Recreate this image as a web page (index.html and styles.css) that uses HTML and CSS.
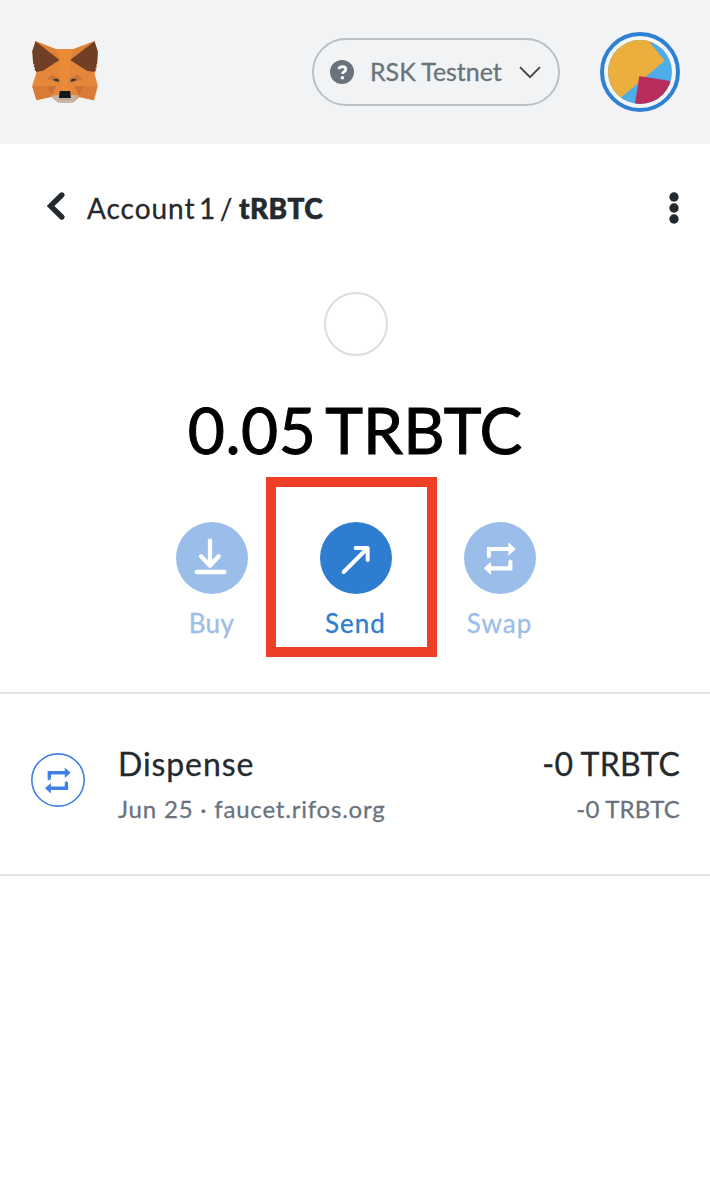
FILE: index.html
```html
<!DOCTYPE html>
<html lang="en">
<head>
<meta charset="utf-8">
<title>Wallet</title>
<link rel="stylesheet" href="styles.css">
</head>
<body>
<svg class="defs" width="0" height="0" aria-hidden="true">
  <symbol id="swap" viewBox="0 0 96 98">
    <path d="M16 42V20h60M80 56v22H20" fill="none" stroke="currentColor" stroke-width="12.500"/>
    <path d="M10 42h12v2l-6 4-6-2zM74 56l6-5 6 5z" fill="currentColor"/>
    <path d="M74 0l22 20-22 20zM22 58L0 78l22 20z" fill="currentColor"/>
  </symbol>
</svg>
<header class="header">
  <svg class="fox" viewBox="36 33 197 186" aria-label="Fox logo">
    <path fill="#e4873b" d="M46 34l62 24h51l64-24 10 34-5 53-5 9 10 38-11 43-44-11-18 17h-48l-18-17-45 11-13-43 12-38z"/>
    <path fill="#d97b37" d="M38 168l-2 1 13 41 45-10-12-32zM231 168l-45 1-13 31 46 10z"/>
    <path fill="#e98a36" d="M108 58h51l-16 101-1 25h-18l-4-25z"/>
    <path fill="#df8039" d="M46 34l62 24 10 32zM223 34l-64 24-9 32z"/>
    <path fill="#713f24" d="M46 34l72 56-50 32-19 4-6-7 2-5-5-4 3-5-4-4-3-37zM223 34l-73 56 50 32 22 4 5-7-2-5 5-4-3-5 4-4 2-37z"/>
    <path fill="#d0742f" d="M96 133l25 16-6 8-35-9zM172 133l-25 16 6 8 35-9z"/>
    <path fill="#cd6f35" d="M81 168l27 1-13 27zM192 168l-30 1 14 27z"/>
    <path fill="#283849" d="M99 147l14-1 5 10-15-4zM169 147l-14-1-5 10 15-4z"/>
    <path fill="#c5b5a6" d="M93 197l26-3h31l26 3-20 21h-41z"/>
    <path fill="#b3a498" d="M115 206h39l-4 4h-31z"/>
    <path fill="#161616" d="M119 183h31l2 21h-36z"/>
  </svg>
  <div class="network">
    <svg class="question" viewBox="0 0 24 24"><circle cx="12" cy="12" r="12" fill="#6a737d"/><path d="M8.700 9.200Q9.400 6.600 12.200 6.600Q15.800 6.700 15.800 9.300Q15.800 11 13.700 12Q12.500 12.600 12.500 14" fill="none" stroke="#fff" stroke-width="2.700"/><circle cx="12.400" cy="17.700" r="1.800" fill="#fff"/></svg>
    <span class="network-name">RSK Testnet</span>
    <svg class="chevron" viewBox="0 0 22 13"><path d="M1 1.200l10 10 10-10" fill="none" stroke="#444" stroke-width="1.900"/></svg>
  </div>
  <svg class="avatar" viewBox="30 36 240 240">
    <circle cx="150" cy="156" r="114" fill="#f4f5f7" stroke="#2f80d3" stroke-width="12"/>
    <clipPath id="disc"><circle cx="150" cy="156" r="96"/></clipPath>
    <g clip-path="url(#disc)"><path fill="#4dadeb" d="M50 56h200v200H50z"/><path fill="#ecae3d" d="M40 40h117l67 82L80 244H40z"/><path fill="#ef8a32" d="M172 58l22 8-12 5z"/><path fill="#b92d5d" d="M148 168l110 18-10 90H131z"/></g>
  </svg>
</header>
<nav class="nav">
  <svg class="back" viewBox="0 0 18 28"><path d="M14.800 3L3.500 14l11.300 11" fill="none" stroke="#24292e" stroke-width="5.400" stroke-linecap="round"/></svg>
  <span class="crumb">Account 1 /</span><strong class="asset">tRBTC</strong>
  <svg class="dots" viewBox="0 0 10 32"><circle cx="5" cy="5" r="4.700"/><circle cx="5" cy="16" r="4.700"/><circle cx="5" cy="27" r="4.700"/></svg>
</nav>
<main>
  <section class="overview">
    <div class="token"></div>
    <h1 class="balance"><span class="amount">0.05</span><span class="unit">TRBTC</span></h1>
    <div class="actions">
      <div class="action off">
        <svg class="disc" viewBox="0 0 216 216"><circle cx="108" cy="108" r="108" fill="#9bbde9"/><path d="M102 56v72M75 103l27 28 26-28M62 150h83" fill="none" stroke="#fff" stroke-width="13" stroke-linecap="round" stroke-linejoin="round"/></svg>
        <span class="buy">Buy</span>
      </div>
      <div class="action">
        <svg class="disc" viewBox="0 0 216 216"><circle cx="108" cy="108" r="108" fill="#2f7dd1"/><path d="M71 150l72-72M107 78h36v36" fill="none" stroke="#fff" stroke-width="12" stroke-linecap="round" stroke-linejoin="round"/></svg>
        <span class="send">Send</span>
        <div class="highlight"></div>
      </div>
      <div class="action off">
        <svg class="disc" viewBox="0 0 216 216"><circle cx="108" cy="108" r="108" fill="#9bbde9"/><g color="#fff"><use href="#swap" x="59" y="61" width="96" height="98"/></g></svg>
        <span class="swap">Swap</span>
      </div>
    </div>
  </section>
  <section class="row">
    <svg class="tx-icon" viewBox="0 0 162 162"><circle cx="81" cy="81" r="78.500" fill="none" stroke="#4482e5" stroke-width="5"/><g color="#3f80e6"><use href="#swap" x="42" y="43" width="77" height="79"/></g></svg>
    <div class="tx">
      <div class="line"><span class="title">Dispense</span><span class="value">-0 TRBTC</span></div>
      <div class="line sub"><span class="source">Jun 25 · faucet.rifos.org</span><span class="subvalue">-0 TRBTC</span></div>
    </div>
  </section>
</main>
</body>
</html>
```
FILE: styles.css
```css
* { box-sizing: border-box; }
body { margin: 0; min-height: 1198px; background: #fff; color: #24292e; font-family: Lato, "Liberation Sans", sans-serif; white-space: nowrap; -webkit-text-stroke: 0.3px currentColor; }
svg { display: block; flex: none; }
.defs { position: absolute; }
.header { height: 144px; padding: 0 30px 0 32px; display: flex; align-items: center; background: #f2f3f5; }
.fox { width: 66px; height: 62px; }
.network { width: 248px; height: 68px; margin-left: auto; margin-right: 40px; padding: 0 17px 0 16px; display: flex; align-items: center; border: 2px solid #bbc0c5; border-radius: 34px; color: #6a737d; }
.question { width: 24px; height: 24px; }
.network-name { margin-left: 16px; margin-top: -2px; font-size: 25px; line-height: 32px; letter-spacing: -0.05px; }
.chevron { width: 22px; height: 13px; margin-left: auto; }
.avatar { width: 80px; height: 80px; }
.nav { height: 128px; padding: 0 31px 0 47px; display: flex; align-items: center; font-size: 28px; line-height: 36px; }
.back { width: 18px; height: 28px; margin-top: -4px; }
.crumb { width: 146px; margin-left: 22px; letter-spacing: 0.95px; word-spacing: -4.5px; }
.asset { margin-left: 6px; font-weight: 900; letter-spacing: 0.4px; -webkit-text-stroke-width: 0.6px; }
.dots { width: 10px; height: 32px; margin-left: auto; fill: #24292e; }
.overview { height: 422px; padding-top: 20px; border-bottom: 2px solid #e1e4e8; display: flex; flex-direction: column; align-items: center; }
.token { width: 64px; height: 64px; margin-left: 2px; border: 2px solid #dedede; border-radius: 50%; flex: none; }
.balance { margin: 34px 0 0; height: 80px; display: flex; gap: 9px; font-size: 64px; line-height: 80px; font-weight: 400; color: #000; -webkit-text-stroke-width: 1px; }
.amount { letter-spacing: 0.5px; }
.actions { margin: 52px 0 0 2px; display: flex; gap: 72px; color: #2f7dd1; }
.action { position: relative; width: 72px; display: flex; flex-direction: column; align-items: center; font-size: 26px; line-height: 32px; gap: 13px; }
.off { color: #9bbde9; }
.disc { width: 72px; height: 72px; }
.action span { margin-left: -1px; letter-spacing: 1px; }
.action .buy { letter-spacing: 0.4px; }
.highlight { position: absolute; left: -54px; top: -45px; width: 171px; height: 180px; border: 10px solid #ed4027; }
.row { height: 182px; padding: 0 30px 0 31px; display: flex; align-items: center; border-bottom: 2px solid #e1e4e8; }
.tx-icon { width: 54px; height: 54px; margin-top: -8px; }
.tx { flex: 1; margin-left: 33px; padding-top: 5px; }
.line { display: flex; justify-content: space-between; font-size: 32px; line-height: 40px; }
.title { letter-spacing: 0.9px; }
.value { letter-spacing: 0.2px; }
.sub { margin-top: 5px; font-size: 24px; color: #6a737d; }
.source { letter-spacing: 0.8px; }
.subvalue { letter-spacing: 0.2px; }
```
